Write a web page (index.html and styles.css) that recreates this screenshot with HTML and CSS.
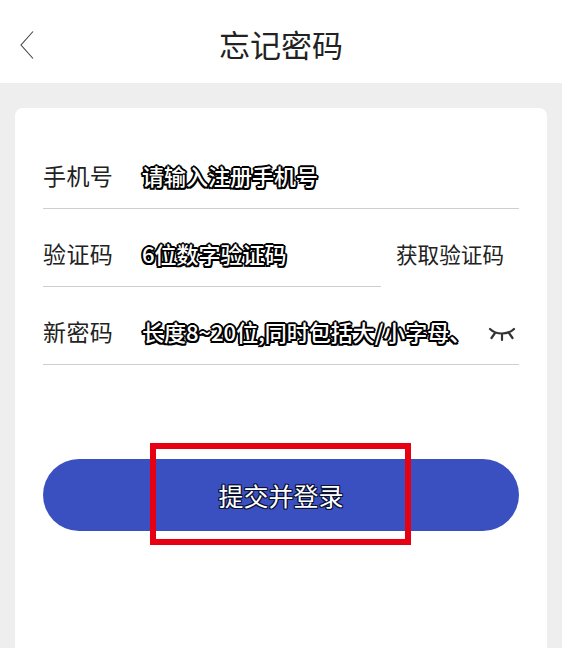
FILE: index.html
```html
<!DOCTYPE html>
<html lang="zh-CN">
<head>
    <meta charset="UTF-8">
    <meta name="viewport" content="width=device-width, initial-scale=1.0">
    <title>忘记密码</title>
    <link rel="stylesheet" href="styles.css">
</head>
<body>
    <header class="header">
        <svg class="back" width="16" height="30" viewBox="0 0 16 30">
            <path d="M14 1.5 L2 15 L14 28.5" fill="none" stroke="#444" stroke-width="1.1"/>
        </svg>
        <h1>忘记密码</h1>
    </header>

    <main class="card">
        <div class="row">
            <span class="label">手机号</span>
            <span class="hint">请输入注册手机号</span>
        </div>
        <div class="row-code">
            <div class="row">
                <span class="label">验证码</span>
                <span class="hint">6位数字验证码</span>
            </div>
            <span class="get-code">获取验证码</span>
        </div>
        <div class="row">
            <span class="label">新密码</span>
            <span class="hint hint-long">长度8~20位,同时包括大/小字母、</span>
            <svg class="eye" width="28" height="16" viewBox="0 0 28 16">
                <path d="M2 3 C8 9 20 9 26 3 M7 7 L3.5 12 M14 8.5 L14 14 M21 7 L24.5 12" fill="none" stroke="#333" stroke-width="2.2" stroke-linecap="round"/>
            </svg>
        </div>

        <div class="submit-wrap">
            <button class="submit">提交并登录</button>
            <div class="highlight"></div>
        </div>
    </main>
</body>
</html>
```

FILE: styles.css
```css
* {
    margin: 0;
    padding: 0;
    box-sizing: border-box;
}

html, body {
    height: 648px;
    overflow: hidden;
}

body {
    font-family: "Noto Sans CJK SC", "Liberation Sans", sans-serif;
    background-color: #eeeeee;
    color: #222;
}

.header {
    height: 83px;
    background: white;
    display: flex;
    align-items: center;
    justify-content: center;
    position: relative;
}

.header h1 {
    font-size: 31px;
    font-weight: 400;
    margin-top: 3px;
}

.back {
    position: absolute;
    left: 19px;
    top: 30px;
}

.card {
    background: white;
    margin: 25px 15px 0;
    padding: 23px 28px 0;
    height: 560px;
    border-radius: 8px;
}

.row {
    height: 78px;
    padding-top: 11px;
    display: flex;
    align-items: center;
    border-bottom: 1px solid #cfcfcf;
    flex: none;
}

.label {
    width: 99px;
    font-size: 23px;
    letter-spacing: 0.4px;
    flex: none;
}

.hint {
    font-size: 22px;
    font-weight: 500;
    color: white;
    white-space: nowrap;
    text-shadow: 2px 0 0 #000, -2px 0 0 #000, 0 2px 0 #000, 0 -2px 0 #000,
        1.5px 1.5px 0 #000, -1.5px 1.5px 0 #000, 1.5px -1.5px 0 #000, -1.5px -1.5px 0 #000;
}

.row-code {
    display: flex;
    align-items: center;
}

.row-code .row {
    width: 338px;
}

.get-code {
    font-size: 21.6px;
    margin-left: 15px;
    padding-top: 11px;
}

.hint-long {
    flex: 1;
    overflow: hidden;
    padding: 3px;
    margin-left: -3px;
}

.eye {
    margin-left: 10px;
    margin-right: 3px;
    margin-top: 6px;
    flex: none;
}

.submit-wrap {
    position: relative;
    margin-top: 94px;
}

.submit {
    display: block;
    width: 100%;
    height: 72px;
    border: none;
    border-radius: 36px;
    background-color: #3a50c0;
    color: white;
    font-family: inherit;
    font-size: 25px;
    text-shadow: 1px 0 0 #0a1030, -1px 0 0 #0a1030, 0 1px 0 #0a1030, 0 -1px 0 #0a1030,
        1px 1px 0 #0a1030, -1px 1px 0 #0a1030, 1px -1px 0 #0a1030, -1px -1px 0 #0a1030;
}

.highlight {
    position: absolute;
    left: 107px;
    top: -16px;
    width: 261px;
    height: 102px;
    border: 6px solid #e60012;
}
```
